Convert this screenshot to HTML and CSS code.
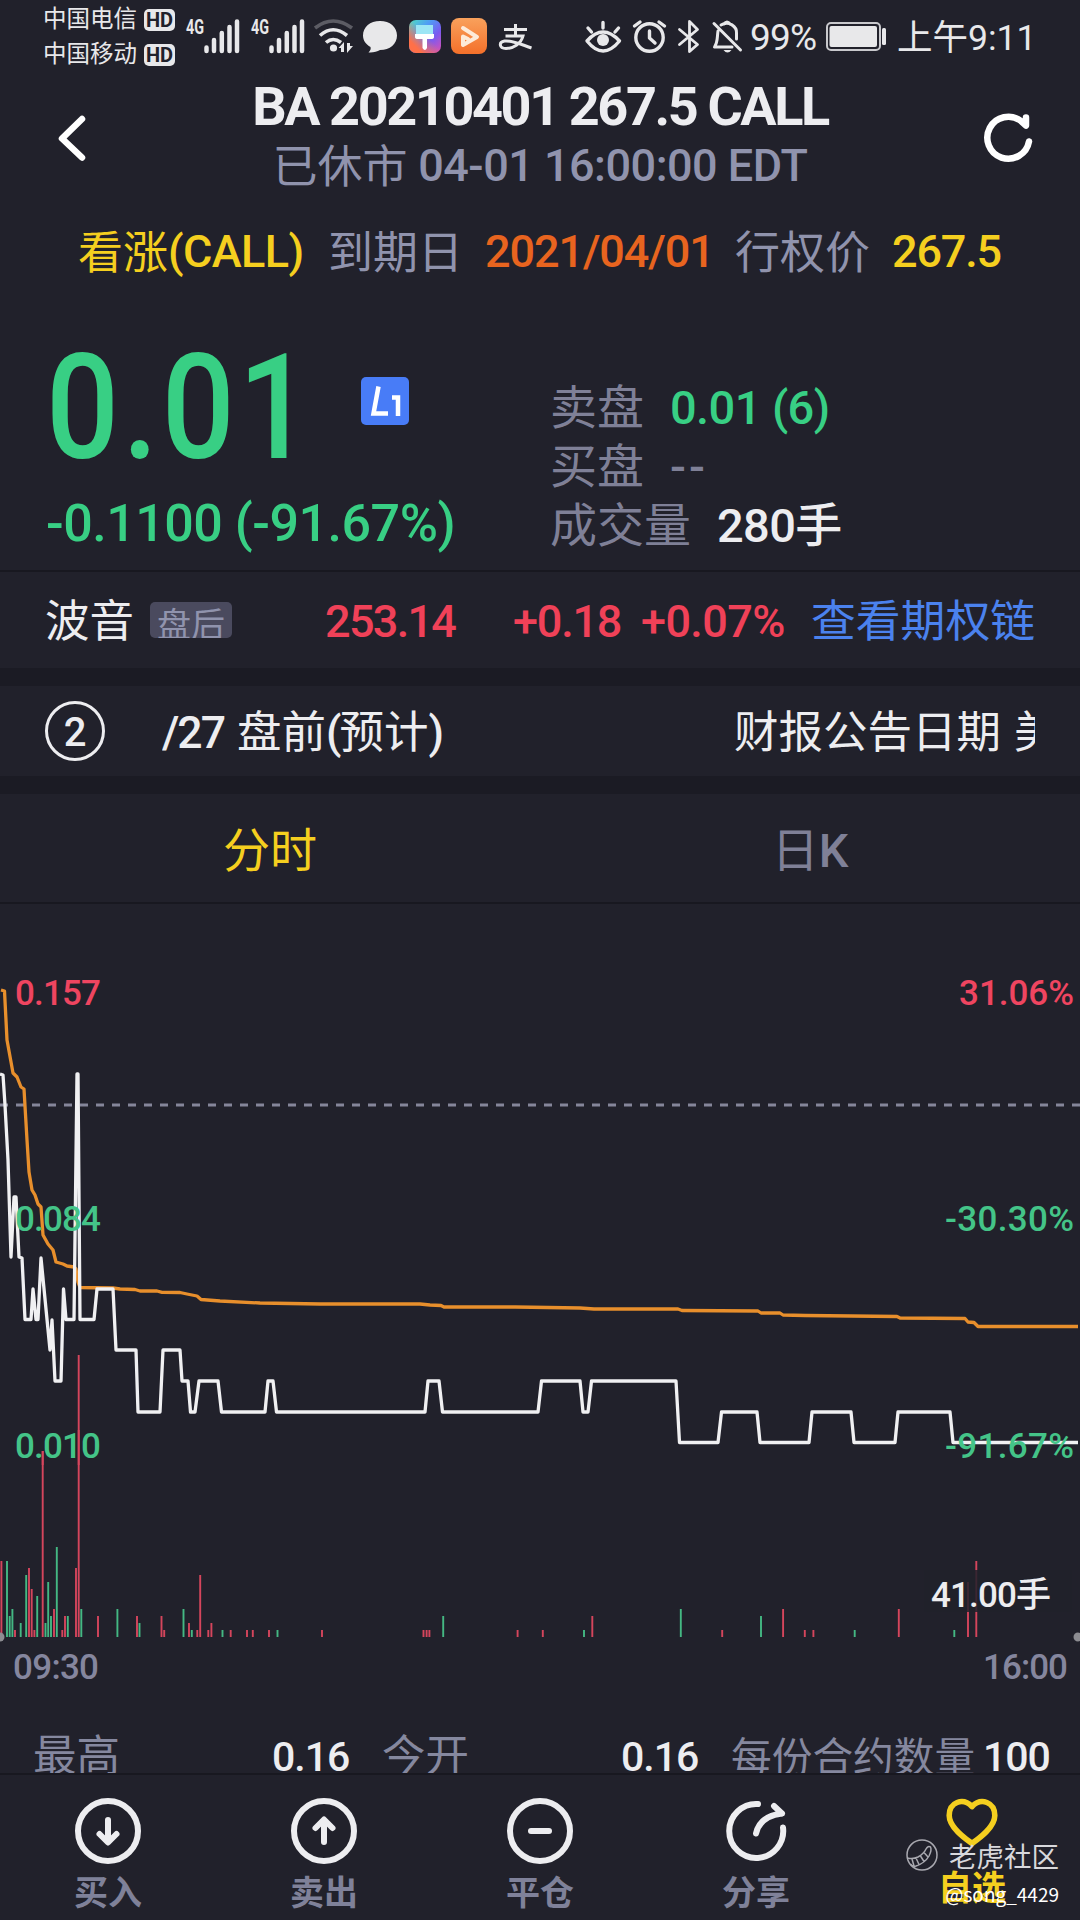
FILE: index.html
```html
<!DOCTYPE html>
<html lang="zh-CN">

<head>
    <meta charset="UTF-8">
    <meta name="viewport" content="width=device-width, initial-scale=1.0">
    <title>BA 20210401 267.5 CALL</title>
    <link rel="stylesheet" href="styles.css">
</head>

<body>
    <div class="status-bar">
        <div class="carriers">
            <div class="carrier">中国电信 <span class="hd">HD</span></div>
            <div class="carrier">中国移动 <span class="hd">HD</span></div>
        </div>
        <svg class="status-left" viewBox="184 0 352 75">
            <defs>
                <linearGradient id="paint" x1="0" y1="0" x2="1" y2="1">
                    <stop offset="0" stop-color="#4fe0c0" />
                    <stop offset="0.35" stop-color="#4f9cf5" />
                    <stop offset="0.65" stop-color="#7a5af0" />
                    <stop offset="1" stop-color="#e04fb0" />
                </linearGradient>
                <linearGradient id="warm" x1="1" y1="0" x2="0" y2="1">
                    <stop offset="0.45" stop-color="#ff7a50" stop-opacity="0" />
                    <stop offset="0.8" stop-color="#ff7048" />
                </linearGradient>
                <linearGradient id="orange" x1="0" y1="0" x2="0" y2="1">
                    <stop offset="0" stop-color="#f9a15c" />
                    <stop offset="1" stop-color="#f4702a" />
                </linearGradient>
            </defs>
            <text class="net" x="186" y="34" textLength="18" lengthAdjust="spacingAndGlyphs">4G</text>
            <path class="signal" d="M206.500 47.500V51M214 40V51M221.800 33V51M229.500 27V51M237 21.500V51" />
            <text class="net" x="251" y="34" textLength="18" lengthAdjust="spacingAndGlyphs">4G</text>
            <path class="signal" d="M271.500 47.500V51M279 40V51M286.800 33V51M294.500 27V51M302 21.500V51" />
            <g fill="none" stroke="#e8e8ea" stroke-width="3.600">
                <path d="M315 28Q333 14 352 28" stroke="#5c5c64" />
                <path d="M320 35.500Q333 24 347 35.500" />
                <path d="M326 42.500Q333 36.500 341 42.500" />
            </g>
            <circle cx="333.500" cy="48" r="3.600" fill="#e8e8ea" />
            <path d="M338.500 48L344 42V52H341V48ZM347 43V53L353 46H350V43Z" fill="#e8e8ea" />
            <path d="M380 21C390 21 397 27 397 35.500C397 44 390 50 380 50C377 51.500 373 53 368.500 52.500C370.500 50.500 371 49 370.500 47C366 44.500 363 40.500 363 35.500C363 27 370 21 380 21Z" fill="#e8e8ea" />
            <rect x="409" y="20" width="32" height="33" rx="7" fill="url(#paint)" />
            <rect x="409" y="20" width="32" height="33" rx="7" fill="url(#warm)" />
            <path d="M416 25H433V34H416Z" fill="#9ce6f5" />
            <path d="M415 34H434V37Q434 39 431 39H427V48Q425 52 422.500 48V39H418Q415 39 415 37Z" fill="#fff" />
            <rect x="451" y="18" width="36" height="36" rx="8" fill="url(#orange)" />
            <path d="M463 28L477 37L463 45V36.500L468 39" fill="none" stroke="#fdebd9" stroke-width="4" stroke-linejoin="round" stroke-linecap="round" />
            <path d="M504 29.500H527M515.500 24V36M505.500 36H523C521 44 513 48.500 506 48.500C499 48.500 498.500 42 504.500 41C512 40 520 44 531.500 48" fill="none" stroke="#e8e8ea" stroke-width="3" />
        </svg>
        <svg class="status-right" viewBox="584 0 162 75" fill="none" stroke="#e8e8ea" stroke-width="3.400" stroke-linecap="round" stroke-linejoin="round">
            <path d="M587 41Q603 23 619.500 41Q603 61 587 41ZM603 22.500V28M588 28L591.500 32M618.500 28L615 32" />
            <circle cx="603" cy="40" r="6" fill="#e8e8ea" stroke="none" />
            <circle cx="649.500" cy="37.500" r="13.700" />
            <path d="M649.500 31V38L655 43M634.500 26L640 22M664.500 26L659 22" />
            <path d="M679.500 29.500L697.500 44.500L689.500 51.500V21.500L697.500 29.500L679.500 44.500" stroke-width="2.800" />
            <path d="M714 23.500L740.500 50M718 31C717 37 718 42 714.500 47H732M721 25C729 20 737 27 736.500 33V39M724 24Q727 20 730 24" stroke-width="3" />
            <path d="M723.500 50H731.500Q727.500 55 723.500 50Z" fill="#e8e8ea" stroke="none" />
        </svg>
        <span class="percent">99%</span>
        <svg class="battery" viewBox="826 0 60 75">
            <rect x="827" y="23" width="53" height="27" rx="4" fill="none" stroke="#c9c9cd" stroke-width="2" />
            <rect x="829.500" y="26" width="47.500" height="21" rx="2" fill="#e8e8ea" />
            <rect x="882" y="28" width="4" height="17" rx="1.500" fill="#e8e8ea" />
        </svg>
        <span class="clock">上午9:11</span>
    </div>

    <header class="header">
        <svg class="back" viewBox="0 0 40 60"><path d="M33 11L13 30.500L33 49.500" /></svg>
        <div class="titles">
            <h1>BA 20210401 267.5 CALL</h1>
            <p><span class="cn">已休市</span> 04-01 16:00:00 EDT</p>
        </div>
        <svg class="refresh" viewBox="978 108 60 60"><path d="M1029 141.500A21 21 0 1 1 1021 121L1026 125.500V117.500" /></svg>
    </header>

    <div class="contract">
        <span class="call yellow"><span class="cn">看涨</span>(CALL)</span>
        <span class="contract-label"><span class="cn">到期日</span></span>
        <span class="expiry">2021/04/01</span>
        <span class="contract-label"><span class="cn">行权价</span></span>
        <span class="strike yellow">267.5</span>
    </div>

    <section class="quote">
        <div class="quote-main green">
            <div class="price-line">
                <div class="price-box"><span class="price">0.01</span></div>
                <svg class="level" viewBox="0 0 48 48">
                    <rect width="48" height="48" rx="5" fill="#487cf7" />
                    <path d="M17.500 9.500L12.500 36.500H27M31 20.500H37V39" fill="none" stroke="#fff" stroke-width="4.500" />
                </svg>
            </div>
            <div class="change">-0.1100 (-91.67%)</div>
        </div>
        <div class="book">
            <div><span class="book-label">卖盘</span><b class="green">0.01 (6)</b></div>
            <div><span class="book-label">买盘</span><b class="dash">--</b></div>
            <div><span class="book-label">成交量</span><b class="volume">280手</b></div>
        </div>
    </section>

    <div class="underlying">
        <span class="name">波音</span>
        <span class="session">盘后</span>
        <span class="last">253.14</span>
        <span class="diff">+0.18</span>
        <span class="pct">+0.07%</span>
        <a class="chain">查看期权链</a>
    </div>

    <div class="notice">
        <span class="count">2</span>
        <div class="ticker">
            <span class="item"><b>/27</b> 盘前<b>(</b>预计<b>)</b></span>
            <span class="item">财报公告日期 美</span>
        </div>
    </div>

    <nav class="tabs">
        <div class="tab active">分时</div>
        <div class="tab">日<b>K</b></div>
    </nav>

    <svg class="chart" viewBox="0 904 1080 796">
        <path d="M0 1105H1080" stroke="#85869a" stroke-width="3" stroke-dasharray="8 8" />

        <g class="label">
            <text x="15" y="1005" textLength="86" class="up">0.157</text>
            <text x="1074" y="1005" textLength="115" text-anchor="end" class="up">31.06%</text>
        </g>

        <!-- volume -->
        <path class="vol vol-up" d="M1.400 1637V1561M15 1637V1630M29 1637V1568M31.700 1637V1589M34.400 1637V1630M42.700 1637V1451M54 1637V1609M62.300 1637V1630M65 1637V1616M76 1637V1568M78.700 1637V1355M98 1637V1616M137 1637V1616M161.500 1637V1616M164.200 1637V1630M189 1637V1623M197.300 1637V1630M200.200 1637V1575M208.300 1637V1630M211.400 1637V1623M230.700 1637V1630M247 1637V1630M252.800 1637V1630M269 1637V1630M322 1637V1630M423.500 1637V1630M426.600 1637V1630M429.400 1637V1630M517.600 1637V1630M542.800 1637V1630M592.300 1637V1616M722.200 1637V1630M783.100 1637V1609M804.800 1637V1630M813.400 1637V1630M898.800 1637V1609M968 1637V1582M976.300 1637V1561" />
        <path class="vol vol-down" d="M7 1637V1561M9.700 1637V1616M12.400 1637V1609M20.700 1637V1623M26.200 1637V1575M37.200 1637V1596M45.500 1637V1623M48.200 1637V1582M51 1637V1616M56.800 1637V1547M67.800 1637V1616M81.300 1637V1609M117.400 1637V1609M139.500 1637V1623M183.500 1637V1609M191.800 1637V1630M222.500 1637V1630M277.500 1637V1630M443.200 1637V1616M584 1637V1630M680.800 1637V1609M761 1637V1616M854.700 1637V1630M954.300 1637V1630" />
        <circle cx="0" cy="1637" r="4.500" fill="#8d8d92" />
        <circle cx="1078" cy="1637" r="4.500" fill="#8d8d92" />

        <!-- average price -->
        <polyline class="line avg" points="1,990 4.500,991 7,1040 13,1073 17,1077 21,1087 24,1089 27,1140 29,1172 32,1190 35,1195 38,1204 41,1207 43,1235 48,1244 53,1250 56,1262 63,1264 67,1266 74,1267 76,1269 78,1282 80,1287.500 113,1288 120,1289 135,1289.500 140,1291 157,1291 162,1292.300 180,1292.500 187,1294 197,1296 201,1299.500 220,1301 260,1303 320,1304 420,1304 430,1305 441,1305.500 444,1307 515,1307 580,1308 594,1309 678,1309 682,1310.500 758,1311 761,1313 780,1313 783,1315 805,1315.500 897,1316.500 900,1318 965,1318.500 968,1322 974,1322.500 978,1326.500 1078,1326.500" />
        <!-- price -->
        <polyline class="line trade" points="0,1074 3,1075 5,1105 8,1160 11,1257 14,1197 16,1197 19,1257 22,1258 25,1319.500 31,1319.500 33,1289 36,1319.500 38,1319.500 41,1258 50,1350 52,1320 55,1381 61,1381 63.500,1289 66,1319.500 74,1319.500 77,1074 78,1074 80,1319.500 94,1319.500 97,1289 113,1289 116,1350 136,1350 138,1412 160,1412 163,1350 180,1350 182,1381 188,1381 190.500,1412 195,1412 199,1381 218,1381 221.500,1412 265,1412 268,1381 273,1381 276.500,1412 425,1412 428,1381 439,1381 442.500,1412 538,1412 541.500,1381 580,1381 583,1412 588,1412 591.500,1381 676,1381 679.500,1442.500 718,1442.500 721.500,1412 757,1412 760,1442.500 809,1442.500 812,1412 851,1412 854,1442.500 895,1442.500 898,1412 950,1412 953,1442.500 1078,1442.500" />

        <g class="label">
            <text x="15" y="1231" textLength="86" class="down">0.084</text>
            <text x="1074" y="1231" textLength="129" text-anchor="end" class="down">-30.30%</text>
            <text x="15" y="1458" textLength="86" class="down">0.010</text>
            <text x="1074" y="1458" textLength="129" text-anchor="end" class="down">-91.67%</text>
            <path d="M78.700 1430V1465M42.700 1451V1465" class="vol vol-up" />
            <rect x="924" y="1570" width="148" height="42" fill="#20212a" fill-opacity="0.850" />
            <text x="931" y="1607" textLength="120" fill="#ededf0">41.00手</text>
            <text x="13" y="1679" textLength="86" class="axis">09:30</text>
            <text x="983" y="1679" textLength="85" class="axis">16:00</text>
        </g>
    </svg>

    <div class="stats">
        <span class="stat-label">最高</span><span class="stat-value">0.16</span>
        <span class="stat-label">今开</span><span class="stat-value">0.16</span>
        <span class="stat-label long">每份合约数量</span><span class="stat-value">100</span>
    </div>

    <footer class="toolbar">
        <div class="tool">
            <svg viewBox="0 0 72 72"><circle cx="36" cy="36" r="30" /><path d="M36 25V47M27.500 39L36 47.500L44.500 39" /></svg>
            <span>买入</span>
        </div>
        <div class="tool">
            <svg viewBox="0 0 72 72"><circle cx="36" cy="36" r="30" /><path d="M36 47V25M27.500 33L36 24.500L44.500 33" /></svg>
            <span>卖出</span>
        </div>
        <div class="tool">
            <svg viewBox="0 0 72 72"><circle cx="36" cy="36" r="30" /><path d="M27 36H45" /></svg>
            <span>平仓</span>
        </div>
        <div class="tool">
            <svg viewBox="0 0 72 72"><path d="M38 9A27 27 0 1 0 63 32.500M36 38.500Q40 21 62 18.500M54 11L62 18.500" /></svg>
            <span>分享</span>
        </div>
        <div class="tool favorite">
            <svg viewBox="0 0 72 72"><path d="M36 52C29 47 11.500 35 11.500 22C11.500 8 26 2 36 12.500C46 2 60.500 8 60.500 22C60.500 35 43 47 36 52Z" /></svg>
            <span>自选</span>
        </div>
        <div class="watermark">
            <div class="community">
                <svg viewBox="0 0 32 32" fill="none" stroke="#a9a9b0" stroke-width="1.500"><circle cx="16" cy="16" r="15" /><path d="M1.500 19Q7 20.500 12 18Q18 14.500 20 10Q22 6.500 24.500 8Q26 11 23 17Q19 24 10 27Q6 28 4.500 25M6 20L8 27M10 19L13 25.500M14.500 17L18 22.500M18 13.500L22 18" /></svg>
                老虎社区
            </div>
            <div class="user">@song_4429</div>
        </div>
    </footer>
</body>

</html>
```
FILE: styles.css
```css
* {
    box-sizing: border-box;
}

body {
    margin: 0;
    width: 1080px;
    height: 1920px;
    overflow: hidden;
    background: #21212b;
    color: #ededf0;
    font-family: Roboto, "Noto Sans CJK SC", sans-serif;
    font-weight: 500;
    white-space: nowrap;
}

svg {
    display: block;
    flex: none;
}

b {
    font-weight: 500;
}

.cn {
    font-weight: 400;
    letter-spacing: 0;
    vertical-align: -2px;
}

.yellow {
    color: #f5cf1f;
}

.green {
    color: #38cf84;
}

/* status bar */
.status-bar {
    display: flex;
    height: 75px;
    padding-left: 43px;
    color: #e8e8ea;
    font-weight: 400;
    line-height: 75px;
}

.carriers {
    width: 141px;
    padding-top: 2px;
}

.carrier {
    display: flex;
    align-items: center;
    justify-content: space-between;
    width: 132px;
    height: 35px;
    font-size: 23.500px;
    line-height: 35px;
}

.hd {
    width: 31px;
    height: 22px;
    border-radius: 5px;
    background: #e8e8ea;
    color: #21212b;
    font-size: 20px;
    font-weight: 700;
    line-height: 22px;
    text-align: center;
}

.status-left {
    width: 352px;
    height: 75px;
}

.net {
    fill: #e8e8ea;
    font-size: 21px;
    font-weight: 700;
}

.signal {
    stroke: #e8e8ea;
    stroke-width: 4.500;
    stroke-linecap: round;
}

.status-right {
    width: 162px;
    height: 75px;
    margin-left: 48px;
}

.percent {
    width: 76px;
    margin-left: 4px;
    font-size: 37px;
    letter-spacing: -0.800px;
}

.battery {
    width: 60px;
    height: 75px;
}

.clock {
    margin-left: 11px;
    font-size: 35.500px;
    line-height: 76px;
}

/* header */
.header {
    display: flex;
    height: 119px;
    padding-left: 49px;
}

.back {
    width: 40px;
    height: 60px;
    margin-top: 33px;
}

.refresh {
    width: 60px;
    height: 60px;
    margin-top: 33px;
}

.back path,
.refresh path {
    fill: none;
    stroke: #fff;
    stroke-width: 6.500;
    stroke-linecap: round;
    stroke-linejoin: round;
}

.titles {
    width: 902px;
    margin-right: -13px;
    text-align: center;
}

.titles h1 {
    margin: 0;
    font-size: 54px;
    font-weight: 700;
    line-height: 63px;
    letter-spacing: -2.400px;
}

.titles p {
    margin: 0;
    color: #9093ad;
    font-size: 45px;
    line-height: 55px;
    letter-spacing: -0.500px;
}

/* contract info */
.contract {
    display: flex;
    height: 114px;
    padding-left: 78px;
    color: #9093ad;
    font-size: 45px;
    line-height: 115px;
}

.call {
    width: 250px;
    letter-spacing: -0.600px;
}

.contract-label {
    width: 157px;
}

.expiry {
    width: 250px;
    color: #e8641f;
    letter-spacing: -1.100px;
}

.strike {
    letter-spacing: -1.200px;
}

/* quote */
.quote {
    display: flex;
    height: 264px;
    border-bottom: 2px solid #181820;
}

.quote-main {
    width: 550px;
    padding-left: 46px;
}

.price-line {
    display: flex;
    align-items: center;
    height: 196px;
}

.price-box {
    width: 315px;
    padding-top: 6px;
}

.price {
    display: inline-block;
    font-size: 146px;
    line-height: 190px;
    letter-spacing: 4px;
    transform: scaleX(0.88);
    transform-origin: left;
}

.level {
    width: 48px;
    height: 48px;
    margin-top: -10px;
}

.change {
    font-size: 52px;
    line-height: 40px;
    letter-spacing: -0.500px;
}

.book {
    padding-top: 70px;
    color: #7f8097;
    font-size: 47px;
    line-height: 59px;
}

.book-label {
    font-weight: 400;
}

.book b {
    margin-left: 26px;
    letter-spacing: -0.600px;
}

.book .dash {
    letter-spacing: 3px;
}

.volume {
    color: #ededf0;
}

/* underlying stock */
.underlying {
    display: flex;
    align-items: center;
    height: 96px;
    padding-left: 45px;
    color: #f04158;
    font-size: 45px;
    line-height: 96px;
}

.name {
    width: 105px;
    padding-top: 4px;
    color: #ededf0;
    font-size: 44.500px;
    font-weight: 400;
}

.session {
    width: 82px;
    height: 36px;
    overflow: hidden;
    border-radius: 5px;
    background: #4a4a5e;
    color: #9093ad;
    font-size: 34px;
    font-weight: 400;
    line-height: 46px;
    text-align: center;
}

.last {
    width: 188px;
    margin-left: 93px;
    padding-top: 4px;
    letter-spacing: -1.700px;
}

.diff {
    width: 128px;
    padding-top: 4px;
    letter-spacing: -1.200px;
}

.pct {
    width: 170px;
    padding-top: 4px;
    letter-spacing: -0.600px;
}

.chain {
    padding-top: 4px;
    color: #4b82ee;
    font-size: 44.800px;
    font-weight: 400;
}

/* notice ticker */
.notice {
    display: flex;
    align-items: center;
    height: 126px;
    padding: 0 45px;
    border-top: 18px solid #1b1b24;
    border-bottom: 18px solid #1b1b24;
    font-size: 44.500px;
    font-weight: 400;
    line-height: 90px;
}

.count {
    width: 60px;
    height: 60px;
    border: 3px solid #ededf0;
    border-radius: 50%;
    font-size: 40px;
    font-weight: 500;
    line-height: 57px;
    text-align: center;
}

.ticker {
    display: flex;
    width: 873px;
    margin-left: 57px;
    padding-top: 3px;
    overflow: hidden;
}

.item {
    flex: none;
    width: 572px;
    word-spacing: 2px;
}

.item b {
    letter-spacing: -2px;
}

/* tabs */
.tabs {
    display: flex;
    height: 110px;
    border-bottom: 2px solid #181820;
    color: #7f8097;
    font-size: 47px;
    font-weight: 400;
    line-height: 113px;
    text-align: center;
}

.tab {
    width: 50%;
}

.active {
    color: #f5cf1f;
}

/* chart */
.chart {
    width: 1080px;
    height: 796px;
}

.label {
    font-size: 35px;
}

.up {
    fill: #ef4560;
}

.down {
    fill: #44c488;
}

.axis {
    fill: #85869e;
}

.line {
    fill: none;
    stroke-width: 3.300;
    stroke-linejoin: round;
}

.avg {
    stroke: #e88f2c;
}

.trade {
    stroke: #f0f0f2;
}

.vol {
    stroke-width: 1.900;
}

.vol-up {
    stroke: #d5455c;
}

.vol-down {
    stroke: #44b883;
}

/* day stats */
.stats {
    display: flex;
    height: 73px;
    padding: 28px 0 0 33px;
    overflow: hidden;
    line-height: 58px;
}

.stat-label {
    flex: none;
    width: 239px;
    color: #85889f;
    font-size: 43.500px;
    font-weight: 400;
}

.stat-value {
    flex: none;
    width: 110px;
    font-size: 41px;
    letter-spacing: -1px;
}

.long {
    width: 252px;
    font-size: 40.700px;
    line-height: 60px;
}

/* bottom toolbar */
.toolbar {
    position: relative;
    display: flex;
    height: 147px;
    border-top: 2px solid #181820;
}

.tool {
    display: flex;
    flex-direction: column;
    align-items: center;
    width: 216px;
    padding-top: 20px;
    color: #7f8199;
    font-size: 34px;
    font-weight: 700;
}

.tool svg {
    width: 72px;
    height: 72px;
    fill: none;
    stroke: #ededf0;
    stroke-width: 6;
    stroke-linecap: round;
    stroke-linejoin: round;
}

.tool span {
    line-height: 52px;
}

.favorite {
    color: #f5cf1f;
}

.favorite svg {
    height: 67px;
    stroke: #f5cf1f;
}

/* community watermark */
.watermark {
    position: absolute;
    top: 62px;
    right: 21px;
    color: #d8d8dc;
    font-family: "Noto Sans CJK SC", sans-serif;
    font-weight: 400;
}

.community {
    display: flex;
    align-items: center;
    font-size: 27.500px;
    line-height: 36px;
}

.community svg {
    width: 32px;
    height: 32px;
    margin-right: 11px;
}

.user {
    color: #fff;
    font-size: 19px;
    line-height: 42px;
    text-align: right;
}
```
